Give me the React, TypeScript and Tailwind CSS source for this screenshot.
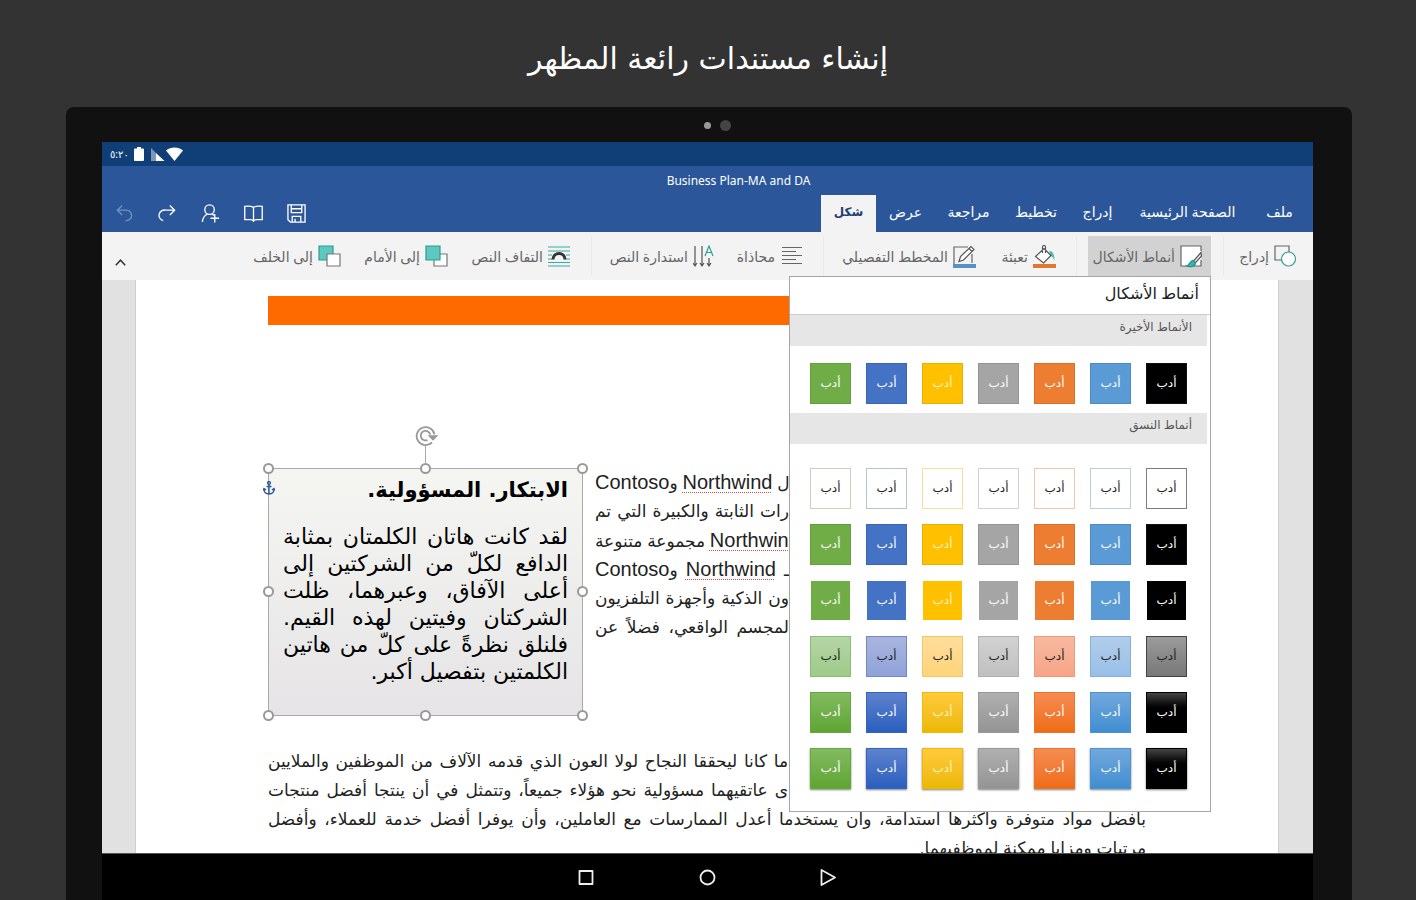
import type { ReactNode } from "react";
import clsx from "clsx";

const tabs = [
  { label: "ملف", width: "w-[59px]" },
  { label: "الصفحة الرئيسية", width: "w-[125px]" },
  { label: "إدراج", width: "w-[55px]" },
  { label: "تخطيط", width: "w-[68px]" },
  { label: "مراجعة", width: "w-[67px]" },
  { label: "عرض", width: "w-[59px]" },
  { label: "شكل", width: "w-[55px]", active: true },
];

const styleRows = [
  [
    "border-[#7c7c7c] bg-white text-[#222]",
    "border-[#b9cddd] bg-white text-[#222]",
    "border-[#eec9a8] bg-white text-[#222]",
    "border-[#d2d2d2] bg-white text-[#222]",
    "border-[#f1e29a] bg-white text-[#222]",
    "border-[#b4c2d6] bg-white text-[#222]",
    "border-[#c5d3b8] bg-white text-[#222]",
  ],
  [
    "border-[#111] bg-black text-white",
    "border-[#4c8ac4] bg-[#5b9bd5] text-white",
    "border-[#d8722b] bg-[#ed7d31] text-white",
    "border-[#949494] bg-[#a5a5a5] text-white",
    "border-[#e8b000] bg-[#ffc000] text-[#fff3c4]",
    "border-[#3b64b4] bg-[#4472c4] text-white",
    "border-[#63a03c] bg-[#70ad47] text-white",
  ],
  [
    "border-white bg-black text-white",
    "border-white bg-[#5b9bd5] text-white",
    "border-white bg-[#ed7d31] text-white",
    "border-white bg-[#a5a5a5] text-white",
    "border-white bg-[#ffc000] text-[#fff3c4]",
    "border-white bg-[#4472c4] text-white",
    "border-white bg-[#70ad47] text-white",
  ],
  [
    "border-[#444] bg-linear-to-b from-[#9b9b9b] to-[#787878] text-[#222]",
    "border-[#85b0dc] bg-linear-to-b from-[#b2cdea] to-[#98bfe8] text-[#222]",
    "border-[#ec9d78] bg-linear-to-b from-[#f7b9a0] to-[#f7a587] text-[#222]",
    "border-[#b0b0b0] bg-linear-to-b from-[#d2d2d2] to-[#c0c0c0] text-[#222]",
    "border-[#f3c765] bg-linear-to-b from-[#ffde9c] to-[#ffd479] text-[#222]",
    "border-[#7388c6] bg-linear-to-b from-[#a9b5df] to-[#8fa2d9] text-[#222]",
    "border-[#8dbd74] bg-linear-to-b from-[#b5d5a7] to-[#9dcb87] text-[#222]",
  ],
  [
    "border-black bg-linear-to-b from-[#454545] via-black to-black text-white",
    "border-[#4b93d3] bg-linear-to-b from-[#71a8dc] to-[#3f8ed1] text-white",
    "border-[#ec7428] bg-linear-to-b from-[#f58c50] to-[#ef6c10] text-white",
    "border-[#999] bg-linear-to-b from-[#b0b0b0] to-[#949494] text-white",
    "border-[#efb90c] bg-linear-to-b from-[#ffca37] to-[#ecb800] text-[#fff3c4]",
    "border-[#3563c0] bg-linear-to-b from-[#5d82cd] to-[#2a5fbe] text-white",
    "border-[#65aa38] bg-linear-to-b from-[#82ba60] to-[#5fa530] text-white",
  ],
  [
    "border-black bg-linear-to-b from-[#454545] via-black to-black text-white shadow-xs shadow-black/50",
    "border-[#4b93d3] bg-linear-to-b from-[#71a8dc] to-[#3f8ed1] text-white shadow-xs shadow-black/50",
    "border-[#ec7428] bg-linear-to-b from-[#f58c50] to-[#ef6c10] text-white shadow-xs shadow-black/50",
    "border-[#999] bg-linear-to-b from-[#b0b0b0] to-[#949494] text-white shadow-xs shadow-black/50",
    "border-[#efb90c] bg-linear-to-b from-[#ffca37] to-[#ecb800] text-[#fff3c4] shadow-xs shadow-black/50",
    "border-[#3563c0] bg-linear-to-b from-[#5d82cd] to-[#2a5fbe] text-white shadow-xs shadow-black/50",
    "border-[#65aa38] bg-linear-to-b from-[#82ba60] to-[#5fa530] text-white shadow-xs shadow-black/50",
  ],
];

const boxLines = [
  "لقد كانت هاتان الكلمتان بمثابة",
  "الدافع لكلّ من الشركتين إلى",
  "أعلى الآفاق، وعبرهما، ظلت",
  "الشركتان وفيتين لهذه القيم.",
  "فلنلق نظرةً على كلّ من هاتين",
];

const handles = [
  "-left-[6px] -top-[6px]",
  "left-1/2 -ml-[6px] -top-[6px]",
  "-right-[6px] -top-[6px]",
  "-left-[6px] top-1/2 -mt-[6px]",
  "-right-[6px] top-1/2 -mt-[6px]",
  "-left-[6px] -bottom-[6px]",
  "left-1/2 -ml-[6px] -bottom-[6px]",
  "-right-[6px] -bottom-[6px]",
];

export default function App() {
  return (
    <div
      dir="rtl"
      className="flex h-screen flex-col overflow-hidden bg-[#333] font-['Noto_Sans','DejaVu_Sans',sans-serif]"
    >
      <h1 className="h-[107px] shrink-0 pt-9 text-center font-['DejaVu_Sans',sans-serif] text-[30px] leading-[46px] text-white">
        إنشاء مستندات رائعة المظهر
      </h1>

      <div className="mr-16 ml-[66px] flex min-h-0 flex-1 flex-col rounded-t-lg bg-[#111] pr-[39px] pl-9">
        <div dir="ltr" className="flex h-[35px] shrink-0 items-center justify-center gap-[9px] pt-px pl-[19px]">
          <span className="size-[7px] rounded-full bg-[#999]" />
          <span className="size-[11px] rounded-full bg-[#444]" />
        </div>
        <StatusBar />
        <TitleBar />
        <Ribbon />
        <Document />
        <NavBar />
      </div>
    </div>
  );
}

function StatusBar() {
  return (
    <div dir="ltr" className="flex h-6 shrink-0 items-center bg-[#103f78] pl-2 text-white">
      <span className="w-6 text-[10px] leading-none">٥:٢٠</span>
      <svg width="10" height="14" viewBox="0 0 10 14" fill="currentColor">
        <path d="M3 0h4v1.500h2q1 0 1 1V13q0 1-1 1H1q-1 0-1-1V2.500q0-1 1-1h2z" />
      </svg>
      <svg className="ml-[7px]" width="14" height="13" viewBox="0 0 14 13">
        <path d="M0 0v13h5V5z" fill="#7d97ba" />
        <path d="M5 5v8h8.500z" fill="#fff" />
      </svg>
      <svg className="ml-px" width="17" height="14" viewBox="0 0 17 14" fill="currentColor">
        <path d="M0 3.500C4.500-.6 12.500-.6 17 3.500L8.500 14z" />
      </svg>
    </div>
  );
}

function TitleBar() {
  return (
    <header className="shrink-0 bg-[#2b579a] text-white">
      <p className="h-[29px] pt-[6px] pl-[62px] text-center text-[12px] leading-[18px]" dir="ltr">
        Business Plan-MA and DA
      </p>
      <div className="flex h-[37px] justify-between pr-1">
        <nav className="flex">
          {tabs.map((tab) => (
            <button
              key={tab.label}
              type="button"
              className={clsx(
                "flex h-full items-center justify-center pb-1 whitespace-nowrap",
                tab.width,
                tab.active ? "bg-[#f3f3f3] text-[12px] font-bold text-[#1f3f75]" : "text-[14px] text-white",
              )}
            >
              {tab.label}
            </button>
          ))}
        </nav>
        <div dir="ltr" className="flex pl-px">
          <QuickButton label="تراجع" dim>
            <path d="M2.500 6.500H12a5.500 5.500 0 0 1 0 11h-1M7.500 1.500l-5 5 5 5" />
          </QuickButton>
          <QuickButton label="إعادة">
            <path d="M17.500 6.500H8a5.500 5.500 0 0 0-2.500 11M12.500 1.500l5 5-5 5" />
          </QuickButton>
          <QuickButton label="مشاركة">
            <circle cx="9" cy="6" r="5" />
            <path d="M1.500 19c0-4 2-6.500 5-8.500M11.500 10.500l2 1.500M14.500 10.500v9M10 15h9" />
          </QuickButton>
          <QuickButton label="قراءة">
            <path d="M10 3.500C7.500 2 4.500 2 .8 2.500v14h6.200q2 0 3 1.500 1-1.500 3-1.500h6.200v-14c-3.700-.5-6.700-.5-9.200 1zM10 3.500V18" />
          </QuickButton>
          <QuickButton label="حفظ">
            <path d="M1 1h18v18H3.500L1 16.500zM4.500 1v8h11V1M5.500 19v-6h9v6M8.500 15.500V19M4.500 5h11" />
          </QuickButton>
        </div>
      </div>
    </header>
  );
}

function QuickButton({ label, dim, children }: { label: string; dim?: boolean; children: ReactNode }) {
  return (
    <button type="button" aria-label={label} className="flex w-[43px] items-center justify-center">
      <svg
        width="19"
        height="19"
        viewBox="0 0 20 20"
        fill="none"
        stroke={dim ? "#7391c0" : "#fff"}
        strokeWidth="1.400"
      >
        {children}
      </svg>
    </button>
  );
}

function Ribbon() {
  return (
    <div className="relative z-10 flex h-12 shrink-0 bg-[#f3f3f3] pt-1 pr-2">
      <Tool label="إدراج" width="w-[70px]">
        <path d="M8 15H1V1h14v6" stroke="#666" />
        <circle cx="14.500" cy="14" r="7" stroke="#2f9c90" fill="#fff" />
      </Tool>
      <Divider />
      <div className="relative h-10">
        <Tool label="أنماط الأشكال" width="w-[123px]" active>
          <path d="M21 15V21H1V1h20v5" stroke="#666" fill="#fff" />
          <path d="M21 7.500l-7.500 8.500 1.800 1.800L21.500 11z" stroke="#555" fill="#eee" />
          <path d="M13 15.500c-3 0-2.500 4-6.500 5.500 4 1.500 9 .5 9-3z" stroke="#1f968b" fill="#3bb5ab" />
        </Tool>
        <StylesMenu />
      </div>
      <Divider />
      <Tool label="تعبئة" width="w-[72px]">
        <path d="M16 6c4.500 0 5.500 4 5.500 10-1-3-2-4-4-5.500z" fill="#4bc0b5" />
        <path d="M2.500 11.500l8.500-8 7 7-7.500 7.500zM9.500 8V2.500q0-2 1.500-2t1.500 2V8" stroke="#555" fill="#fff" />
        <path d="M0 21h23" stroke="#e27730" strokeWidth="4" />
      </Tool>
      <Tool label="المخطط التفصيلي" width="w-[149px]" className="mr-2">
        <path d="M15 2H1v18M19 9v9" stroke="#666" />
        <path d="M6 16.500l1.500-5L18 1.500 21 4.500 10.500 15zM16 3.500l3 3" stroke="#555" fill="#fff" />
        <path d="M0 21h23" stroke="#5b8fc8" strokeWidth="4" />
      </Tool>
      <Divider />
      <Tool label="محاذاة" width="w-[79px]">
        <path d="M2 2.500h20M2 6.500h14M2 10.500h20M2 14.500h14M2 18.500h20" stroke="#666" />
      </Tool>
      <Tool label="استدارة النص" width="w-[121px]" className="mr-2">
        <path d="M2 1v20M0 18l2 3 2-3M9 1v20M7 18l2 3 2-3M16 13v8M14 18l2 3 2-3" stroke="#555" />
        <path d="M12 11l4-10 4 10M13.500 7.500h5" stroke="#2fa097" />
      </Tool>
      <Divider />
      <Tool label="التفاف النص" width="w-[115px]">
        <path d="M0 2h22M0 6h22M0 10h4M18 10h4M0 14h4M18 14h4M0 17.500h22M0 21h22" stroke="#3aaca2" />
        <path d="M5 14.500c0-8 12-8 12 0" stroke="#333" strokeWidth="3" fill="#f3f3f3" />
      </Tool>
      <Tool label="إلى الأمام" width="w-[99px]" className="mr-2">
        <path d="M9 9h13v12H9z" stroke="#777" fill="#fff" />
        <path d="M1 1h14v14H1z" stroke="#2f9c90" fill="#5cc9c0" />
      </Tool>
      <Tool label="إلى الخلف" width="w-[101px]" className="mr-2">
        <path d="M1 1h14v14H1z" stroke="#2f9c90" fill="#5cc9c0" />
        <path d="M9 9h13v12H9z" stroke="#777" fill="#fff" />
      </Tool>
      <button type="button" aria-label="طي الشريط" className="mr-auto flex w-9 items-center justify-center pt-2">
        <svg width="11" height="7" viewBox="0 0 11 7" fill="none" stroke="#333" strokeWidth="1.500">
          <path d="M.8 6.200l4.700-5 4.700 5" />
        </svg>
      </button>
    </div>
  );
}

function Tool({
  label,
  width,
  active,
  className,
  children,
}: {
  label: string;
  width: string;
  active?: boolean;
  className?: string;
  children: ReactNode;
}) {
  return (
    <button
      type="button"
      className={clsx(
        "flex h-10 shrink-0 items-center gap-[5px] px-2 text-[14px] whitespace-nowrap text-[#666]",
        width,
        active && "bg-[#d2d2d2]",
        className,
      )}
    >
      <svg className="shrink-0" width="23" height="23" viewBox="0 0 23 23" fill="none" strokeWidth="1.200">
        {children}
      </svg>
      {label}
    </button>
  );
}

function Divider() {
  return (
    <span className="flex h-10 w-6 shrink-0 justify-center">
      <span className="w-px bg-[#ebebeb]" />
    </span>
  );
}

function StylesMenu() {
  return (
    <div className="absolute top-full right-0 w-[422px] border border-[#a6a6a6] bg-white pb-[22px]">
      <h2 className="h-[38px] border-b border-[#ccc] pr-[11px] text-[16px] leading-8 text-[#222]">أنماط الأشكال</h2>
      <MenuHeading>الأنماط الأخيرة</MenuHeading>
      <div className="flex gap-[15px] pt-[17px] pr-[23px] pb-[9px]">
        {styleRows[1].map((style) => (
          <Swatch key={style} style={style} />
        ))}
      </div>
      <MenuHeading>أنماط النسق</MenuHeading>
      <div className="flex flex-col gap-[15px] pt-6 pr-[23px]">
        {styleRows.map((row, index) => (
          <div key={index} className="flex gap-[15px]">
            {row.map((style) => (
              <Swatch key={style} style={style} />
            ))}
          </div>
        ))}
      </div>
    </div>
  );
}

function MenuHeading({ children }: { children: ReactNode }) {
  return <h3 className="mr-[3px] h-[31px] bg-[#e6e6e6] pr-[15px] text-[12px] leading-6 text-[#555]">{children}</h3>;
}

function Swatch({ style }: { style: string }) {
  return (
    <button
      type="button"
      className={clsx("flex size-[41px] shrink-0 items-center justify-center border pb-px text-[12px]", style)}
    >
      أدب
    </button>
  );
}

function Document() {
  return (
    <main className="min-h-0 flex-1 overflow-hidden bg-[#e1e1e1] pr-[34px] pl-[33px]">
      <article className="h-full border-x border-[#d0d0d0] bg-white pt-4 pr-[132px] pl-[132px] font-['Liberation_Sans','DejaVu_Sans',sans-serif] text-[17px] leading-[29px] text-[#222]">
        <div className="h-[29px] bg-[#ff6a00]" />
        <div className="mt-[143px] flex justify-end gap-3">
          <div className="w-[194px] whitespace-nowrap">
            <SideLine>
              ل <Name>Northwind</Name> و<Latin>Contoso</Latin>
            </SideLine>
            <SideLine>رات الثابتة والكبيرة التي تم</SideLine>
            <SideLine>
              <Name>Northwind</Name> مجموعة متنوعة
            </SideLine>
            <SideLine>
              ـ <Name>Northwind</Name> و<Latin>Contoso</Latin>
            </SideLine>
            <SideLine>ون الذكية وأجهزة التلفزيون</SideLine>
            <SideLine>لمجسم الواقعي، فضلاً عن</SideLine>
          </div>
          <TextBox />
        </div>
        <div className="mt-[31px] whitespace-nowrap">
          <p className="pr-[358px] [text-align-last:justify]">
            ما كانا ليحققا النجاح لولا العون الذي قدمه الآلاف من الموظفين والملايين
          </p>
          <p className="pr-[358px] [text-align-last:justify]">
            ى عاتقيهما مسؤولية نحو هؤلاء جميعاً، وتتمثل في أن ينتجا أفضل منتجات
          </p>
          <p className="[text-align-last:justify]">
            بأفضل مواد متوفرة وأكثرها استدامة، وأن يستخدما أعدل الممارسات مع العاملين، وأن يوفرا أفضل خدمة للعملاء،
            وأفضل
          </p>
          <p>مرتبات ومزايا ممكنة لموظفيهما.</p>
        </div>
      </article>
    </main>
  );
}

// min-w-full justifies the short lines, longer ones run on under the styles menu
function SideLine({ children }: { children: ReactNode }) {
  return (
    <p className="flex h-[29px] justify-end">
      <span className="min-w-full shrink-0 [text-align-last:justify]">{children}</span>
    </p>
  );
}

function Latin({ children }: { children: ReactNode }) {
  return <span className="text-[20px]">{children}</span>;
}

function Name({ children }: { children: ReactNode }) {
  return (
    <span className="text-[20px] underline decoration-[#e04848] decoration-dotted decoration-1 underline-offset-3">
      {children}
    </span>
  );
}

function TextBox() {
  return (
    <section className="relative h-[248px] w-[315px] shrink-0 border border-[#aaa] bg-linear-to-b from-[#f5f6f2] to-[#e6e4e6] px-[14px] pt-2 font-['DejaVu_Sans',sans-serif] text-black">
      <h2 className="text-[21px] leading-[27px] font-bold">الابتكار. المسؤولية.</h2>
      <div className="mt-[19px] text-[22px] leading-[27px] whitespace-nowrap">
        {boxLines.map((line) => (
          <p key={line} className="[text-align-last:justify]">
            {line}
          </p>
        ))}
        <p>الكلمتين بتفصيل أكبر.</p>
      </div>

      {handles.map((position) => (
        <span
          key={position}
          className={clsx("absolute size-[11px] rounded-full border-2 border-[#999] bg-white", position)}
        />
      ))}
      <svg
        className="absolute -top-[43px] left-[145px]"
        width="26"
        height="38"
        viewBox="0 0 26 38"
        fill="none"
        stroke="#999"
      >
        <path d="M11.500 20v18" stroke="#aaa" />
        <path d="M18 16.500A9 9 0 1 1 20.500 8.500" strokeWidth="1.800" />
        <path d="M13.500 14A4.800 4.800 0 1 1 16.300 9" strokeWidth="1.800" />
        <path d="M13 9H25l-6 6z" fill="#999" stroke="#fff" strokeWidth=".5" />
      </svg>
      <svg
        className="absolute top-3 -left-[6px]"
        width="12"
        height="14"
        viewBox="0 0 12 14"
        fill="none"
        stroke="#2b579a"
        strokeWidth="1.400"
      >
        <circle cx="6" cy="2" r="1.400" />
        <path d="M6 3.500V13M3.500 5.500h5M1 8c0 3 2 5 5 5s5-2 5-5M0 9.500l1-2 2 1.500M12 9.500l-1-2-2 1.500" />
      </svg>
    </section>
  );
}

function NavBar() {
  return (
    <nav dir="ltr" className="flex h-[47px] shrink-0 justify-center border-t border-[#555] bg-black">
      <NavButton label="التطبيقات الأخيرة">
        <path d="M1.500 2h13v13h-13z" />
      </NavButton>
      <NavButton label="الشاشة الرئيسية">
        <circle cx="8.500" cy="8.500" r="7" />
      </NavButton>
      <NavButton label="رجوع">
        <path d="M1.500 1v15L15 8.500z" />
      </NavButton>
    </nav>
  );
}

function NavButton({ label, children }: { label: string; children: ReactNode }) {
  return (
    <button type="button" aria-label={label} className="flex w-[121px] items-center justify-center">
      <svg width="17" height="17" viewBox="0 0 17 17" fill="none" stroke="#eee" strokeWidth="1.800" strokeLinejoin="round">
        {children}
      </svg>
    </button>
  );
}
